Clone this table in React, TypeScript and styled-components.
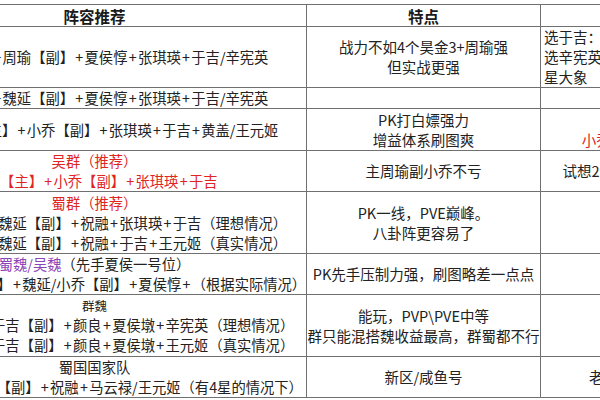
import { Fragment } from "react";
import styled, { createGlobalStyle } from "styled-components";

const GlobalStyle = createGlobalStyle`
    html, body {
        margin: 0;
        padding: 0;
        background: #fff;
    }

    body {
        font-family: "Noto Sans CJK SC", "Noto Sans", sans-serif;
        color: #222;
    }
`;

const Frame = styled.div`
    width: 600px;
    height: 400px;
    overflow: hidden;
    background: #fff;
    padding-top: 4px;
    box-sizing: border-box;
`;

// the sheet is wider than the window: the first column runs off the left edge
const Table = styled.table`
    border-collapse: collapse;
    table-layout: fixed;
    margin-left: -118px;
    width: 958px;
    font-size: 14.5px;
`;

const Row = styled.tr<{ $h: number }>`
    height: ${ (p) => p.$h }px;
`;

const HeadCell = styled.th`
    border: 1px solid #707070;
    padding: 0;
    font-size: 15.5px;
    font-weight: 700;
    line-height: 20px;
    text-align: center;
    color: #1a1a1a;
`;

const Cell = styled.td<{ $align?: string; $lead?: boolean }>`
    border: 1px solid #707070;
    padding: ${ (p) => (p.$align === 'left' ? '0 0 0 3px' : '0') };
    text-align: ${ (p) => p.$align || 'center' };
    font-size: ${ (p) => (p.$lead ? '14.3px' : 'inherit') };
    vertical-align: middle;
    white-space: nowrap;
    overflow: hidden;
    line-height: 20px;
`;

const tones: any = {
    red: '#e0241f',
    purple: '#8a45b8',
    dark: '#222',
};

const Line = styled.div<{ $tone?: string; $small?: boolean }>`
    color: ${ (p) => tones[p.$tone || 'dark'] };
    font-size: ${ (p) => (p.$small ? '12.5px' : 'inherit') };
    line-height: ${ (p) => (p.$small ? '18px' : '20px') };
`;

const Tint = styled.span<{ $tone: string }>`
    color: ${ (p) => tones[p.$tone] };
`;

const Plus = styled.span`
    display: inline-block;
    width: 10.5px;
    text-align: center;
`;

const combo = (text: string) => {
    return text.split('+').map((part, i) => (
        <Fragment key={ i }>
            { i > 0 && <Plus>+</Plus> }
            { part }
        </Fragment>
    ));
}

const App = () => {
    return (
        <>
            <GlobalStyle/>
            <Frame>
                <Table>
                    <colgroup>
                        <col style={ { width: 424 } }/>
                        <col style={ { width: 234 } }/>
                        <col style={ { width: 300 } }/>
                    </colgroup>
                    <tbody>
                    <Row $h={ 22 }>
                        <HeadCell>阵容推荐</HeadCell>
                        <HeadCell>特点</HeadCell>
                        <HeadCell/>
                    </Row>
                    <Row $h={ 61 }>
                        <Cell $lead><Line>{ combo('孙权【主】+周瑜【副】+夏侯惇+张琪瑛+于吉/辛宪英') }</Line></Cell>
                        <Cell>
                            <Line>战力不如4个昊金3+周瑜强</Line>
                            <Line>但实战更强</Line>
                        </Cell>
                        <Cell $align={ 'left' }>
                            <Line>选于吉：输出更高</Line>
                            <Line>选辛宪英续航强</Line>
                            <Line>星大象</Line>
                        </Cell>
                    </Row>
                    <Row $h={ 21 }>
                        <Cell $lead><Line>{ combo('刘禅【主】+魏延【副】+夏侯惇+张琪瑛+于吉/辛宪英') }</Line></Cell>
                        <Cell/>
                        <Cell/>
                    </Row>
                    <Row $h={ 42 }>
                        <Cell $lead><Line>{ combo('孙权/周瑜【主】+小乔【副】+张琪瑛+于吉+黄盖/王元姬') }</Line></Cell>
                        <Cell>
                            <Line>PK打白嫖强力</Line>
                            <Line>增益体系刷图爽</Line>
                        </Cell>
                        <Cell>
                            <Line>&nbsp;</Line>
                            <Line $tone={ 'red' }>小乔可替换为大乔，效果也很不错</Line>
                        </Cell>
                    </Row>
                    <Row $h={ 40 }>
                        <Cell $lead>
                            <Line $tone={ 'red' }>吴群（推荐）</Line>
                            <Line $tone={ 'red' }>{ combo('周瑜【主】+小乔【副】+张琪瑛+于吉') }</Line>
                        </Cell>
                        <Cell><Line>主周瑜副小乔不亏</Line></Cell>
                        <Cell><Line>试想2星周瑜能不能打过4星昊金3的阵容</Line></Cell>
                    </Row>
                    <Row $h={ 62 }>
                        <Cell $lead>
                            <Line $tone={ 'red' }>蜀群（推荐）</Line>
                            <Line>{ combo('诸葛亮【主】+魏延【副】+祝融+张琪瑛+于吉（理想情况）') }</Line>
                            <Line>{ combo('诸葛亮【主】+魏延【副】+祝融+于吉+王元姬（真实情况）') }</Line>
                        </Cell>
                        <Cell>
                            <Line>PK一线，PVE巅峰。</Line>
                            <Line>八卦阵更容易了</Line>
                        </Cell>
                        <Cell/>
                    </Row>
                    <Row $h={ 40 }>
                        <Cell $lead>
                            <Line><Tint $tone={ 'purple' }>蜀魏/吴魏</Tint>（先手夏侯一号位）</Line>
                            <Line>{ combo('夏侯渊夏侯霸【主】+魏延/小乔【副】+夏侯惇+（根据实际情况）') }</Line>
                        </Cell>
                        <Cell><Line>PK先手压制力强，刷图略差一点点</Line></Cell>
                        <Cell/>
                    </Row>
                    <Row $h={ 62 }>
                        <Cell $lead>
                            <Line $small>群魏</Line>
                            <Line>{ combo('司马懿【主】+于吉【副】+颜良+夏侯墩+辛宪英（理想情况）') }</Line>
                            <Line>{ combo('司马懿【主】+于吉【副】+颜良+夏侯墩+王元姬（真实情况）') }</Line>
                        </Cell>
                        <Cell>
                            <Line>{ '能玩，PVP\\PVE中等' }</Line>
                            <Line>群只能混搭魏收益最高，群蜀都不行</Line>
                        </Cell>
                        <Cell/>
                    </Row>
                    <Row $h={ 41 }>
                        <Cell $lead>
                            <Line>蜀国国家队</Line>
                            <Line>{ combo('刘备【主】+赵云【副】+祝融+马云禄/王元姬（有4星的情况下）') }</Line>
                        </Cell>
                        <Cell><Line>新区/咸鱼号</Line></Cell>
                        <Cell><Line>老区玩家建议优先考虑其他阵容</Line></Cell>
                    </Row>
                    </tbody>
                </Table>
            </Frame>
        </>
    )
}

export default App;
